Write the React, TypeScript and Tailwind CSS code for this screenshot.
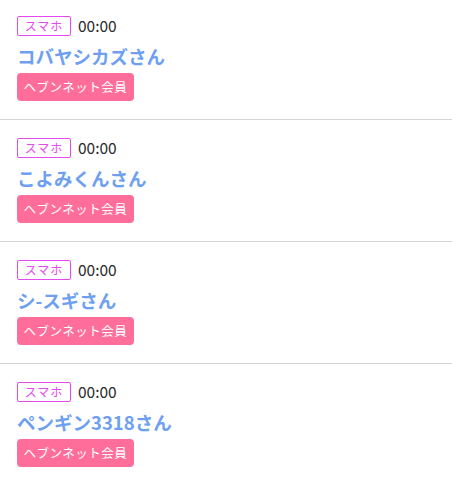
const users = ["コバヤシカズさん", "こよみくんさん", "シ-スギさん", "ペンギン3318さん"];

export default function App() {
  return (
    <div
      className="min-h-screen w-[452px] bg-white"
      style={{ fontFamily: '"Noto Sans CJK JP", "Noto Sans", sans-serif' }}
    >
      {users.map((name, i) => (
        <div
          key={name}
          className={`px-[17px] pb-[18px] border-b border-[#d4d4d4] ${i === 0 ? "pt-4" : "pt-[18px]"}`}
        >
          <div className="flex items-center h-5">
            <span className="h-5 w-[54px] flex items-center justify-center border border-[#e54af0] rounded-[2px] text-[12px] tracking-[1px] text-[#e54af0] leading-none">
              スマホ
            </span>
            <span className="ml-[7px] text-[15.5px] text-[#2a2a2a] leading-none">00:00</span>
          </div>
          <div className="mt-[7px] mb-[4px] leading-[26px] text-[18.5px] font-semibold text-[#6e9ff0]">
            {name}
          </div>
          <div className="flex w-[117px] items-center justify-center h-7 rounded-[4px] bg-[#ff6d9a] text-white text-[12.5px] tracking-[0.5px] leading-none">
            ヘブンネット会員
          </div>
        </div>
      ))}
    </div>
  );
}
